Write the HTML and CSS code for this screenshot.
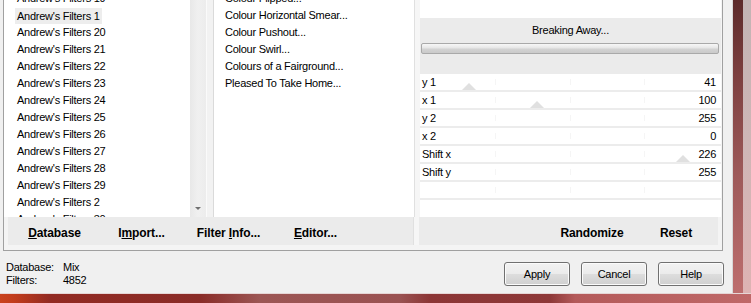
FILE: index.html
```html
<!DOCTYPE html>
<html>
<head>
<meta charset="utf-8">
<link rel="stylesheet" href="styles.css">
</head>
<body>
<div class="screen">
  <div class="top">
    <div class="dialog">
      <div class="group">
        <div class="panes">
          <div class="list list-left">
            <div class="list-inner">
              <div class="item">Andrew's Filters 19</div>
              <div class="item sel"><span>Andrew's Filters 1</span></div>
              <div class="item">Andrew's Filters 20</div>
              <div class="item">Andrew's Filters 21</div>
              <div class="item">Andrew's Filters 22</div>
              <div class="item">Andrew's Filters 23</div>
              <div class="item">Andrew's Filters 24</div>
              <div class="item">Andrew's Filters 25</div>
              <div class="item">Andrew's Filters 26</div>
              <div class="item">Andrew's Filters 27</div>
              <div class="item">Andrew's Filters 28</div>
              <div class="item">Andrew's Filters 29</div>
              <div class="item">Andrew's Filters 2</div>
              <div class="item">Andrew's Filters 30</div>
            </div>
          </div>
          <div class="scrollbar"><div class="arrow-btn"><span class="arrow"></span></div></div>
          <div class="gap"></div>
          <div class="list list-mid">
            <div class="list-inner">
              <div class="item">Colour Flipped...</div>
              <div class="item">Colour Horizontal Smear...</div>
              <div class="item">Colour Pushout...</div>
              <div class="item">Colour Swirl...</div>
              <div class="item">Colours of a Fairground...</div>
              <div class="item">Pleased To Take Home...</div>
            </div>
          </div>
          <div class="sep"></div>
          <div class="panel">
            <div class="title-box">
              <div class="title">Breaking Away...</div>
              <div class="progress"></div>
            </div>
            <div class="param"><span>y 1</span><span>41</span><i class="thumb" style="left:49px"></i></div>
            <div class="param"><span>x 1</span><span>100</span><i class="thumb" style="left:117px"></i></div>
            <div class="param"><span>y 2</span><span>255</span></div>
            <div class="param"><span>x 2</span><span>0</span></div>
            <div class="param"><span>Shift x</span><span>226</span><i class="thumb" style="left:263px"></i></div>
            <div class="param"><span>Shift y</span><span>255</span></div>
            <div class="param empty"></div>
          </div>
        </div>
        <div class="bars">
          <div class="bar bar-left">
            <div class="cmd"><u>D</u>atabase</div>
            <div class="cmd">I<u>m</u>port...</div>
            <div class="cmd">Filter <u>I</u>nfo...</div>
            <div class="cmd"><u>E</u>ditor...</div>
          </div>
          <div class="sep sep-bar"></div>
          <div class="bar bar-right">
            <div class="cmd wide">Randomize</div>
            <div class="cmd wide">Reset</div>
          </div>
        </div>
      </div>
      <div class="status">
        <div class="info">
          <span>Database:</span><span>Mix</span>
          <span>Filters:</span><span>4852</span>
        </div>
        <div class="buttons">
          <div class="btn">Apply</div>
          <div class="btn">Cancel</div>
          <div class="btn">Help</div>
        </div>
      </div>
    </div>
    <div class="frame-right">
      <div class="frame-dark"></div>
      <div class="frame-light"></div>
    </div>
  </div>
  <div class="frame-bottom"></div>
</div>
</body>
</html>
```
FILE: styles.css
```css
* { box-sizing: border-box; margin: 0; padding: 0; }
html, body { width: 751px; height: 303px; overflow: hidden; }
body {
  font-family: "Liberation Sans", Arial, sans-serif;
  font-size: 11px;
  letter-spacing: -0.25px;
  color: #000;
  background: #f0f0f0;
}
.screen { display: flex; flex-direction: column; width: 751px; height: 303px; }
.top { display: flex; height: 293px; }
.dialog {
  width: 733px;
  background: #f0f0f0;
  border-right: 1px solid #d8d8d8;
  display: flex;
  flex-direction: column;
}
.group {
  margin-left: 3px;
  width: 720px;
  height: 251px;
  border: 1px solid #a0a0a0;
  border-top: none;
  background: #f4f4f4;
  display: flex;
  flex-direction: column;
}
.panes { display: flex; height: 217px; }
.list { background: #fff; overflow: hidden; }
.list-left { width: 186px; padding-left: 13px; }
.list-mid { width: 201px; padding-left: 11px; border-left: 1px solid #dadada; }
.list-inner { margin-top: -10px; }
.item { height: 17px; line-height: 17px; white-space: nowrap; }
.item.sel span {
  display: inline-block;
  height: 16px;
  line-height: 16px;
  margin-top: 1px;
  padding: 0 2px;
  margin-left: -2px;
  background: #ededed;
}
.scrollbar {
  width: 16px;
  background: linear-gradient(to right, #e8e8e8, #f0f0f0 50%, #ececec);
  display: flex;
  flex-direction: column;
  justify-content: flex-end;
}
.arrow-btn { height: 17px; display: flex; justify-content: center; padding-top: 7px; }
.arrow {
  width: 0; height: 0;
  border-left: 3px solid transparent;
  border-right: 3px solid transparent;
  border-top: 3px solid #707070;
}
.gap { width: 7px; background: #f2f2f2; border-left: 1px solid #fafafa; }
.sep { width: 6px; background: #f6f6f6; border-left: 1px solid #e0e0e0; }
.panel { width: 301px; background: #fff; position: relative; }
.title-box {
  margin-top: 18px;
  height: 56px;
  background: #ebebeb;
  padding-top: 6px;
}
.title { text-align: center; line-height: 13px; height: 13px; }
.progress {
  margin: 6px 2px 0 1px;
  height: 11px;
  border: 1px solid #a9a9a9;
  border-radius: 2px;
  background: linear-gradient(#f7f7f7, #e6e6e6 45%, #d3d3d3 55%, #cacaca);
}
.param {
  position: relative;
  height: 18px;
  border-bottom: 2px solid #ececec;
  display: flex;
  justify-content: space-between;
  padding: 0 5px 0 2px;
  line-height: 16px;
  background:
    linear-gradient(#f5f5f5, #f5f5f5) 75px 5px / 1px 6px no-repeat,
    linear-gradient(#f5f5f5, #f5f5f5) 150px 5px / 1px 6px no-repeat,
    linear-gradient(#f5f5f5, #f5f5f5) 224px 5px / 1px 6px no-repeat;
}
.param span { position: relative; z-index: 1; }
.thumb {
  position: absolute;
  bottom: 0;
  width: 0; height: 0;
  margin-left: -7px;
  border-left: 7px solid transparent;
  border-right: 7px solid transparent;
  border-bottom: 7px solid #e0e0e0;
}
.bars { display: flex; height: 28px; }
.bar { background: #ebebeb; display: flex; align-items: center; padding-top: 3px; font-weight: bold; font-size: 12px; letter-spacing: -0.1px; }
.bar-left { margin-left: 4px; width: 405px; padding-left: 3px; }
.sep-bar { background: #f6f6f6; }
.bar-right { width: 299px; justify-content: flex-end; }
.cmd { width: 87px; text-align: center; }
.cmd.wide { width: 84px; }
.status { display: flex; height: 42px; padding: 10px 8px 0 6px; }
.info {
  display: grid;
  grid-template-columns: 57px auto;
  grid-auto-rows: 13px;
  line-height: 13px;
  align-content: start;
}
.buttons { margin-left: auto; display: flex; gap: 11px; margin-top: 1px; align-items: flex-start; }
.btn {
  width: 66px;
  height: 24px;
  border: 1px solid #707070;
  border-radius: 3px;
  background: linear-gradient(#f2f2f2 0%, #ebebeb 50%, #dddddd 51%, #cfcfcf 100%);
  box-shadow: inset 0 0 0 1px #fbfbfb;
  text-align: center;
  line-height: 22px;
}
.frame-right { flex: 1; display: flex; }
.frame-dark { width: 10px; background: linear-gradient(#5c2a2a, #7c3f3f 25%, #9e5a5a 60%, #bd6e6e); }
.frame-light { flex: 1; background: linear-gradient(#c2b4b4, #cfb6b6 50%, #deb3b3); }
.frame-bottom {
  height: 10px;
  border-top: 1px solid #e6d6d6;
  background: linear-gradient(to right, #c9421d 0px, #c23c1c 14px, #922a22 50px, #8a2c28 200px, #9c5654 260px, #9a5252 400px, #8c3636 430px, #8e3838 550px, #b45a5a 575px, #bf6868 751px);
}
```
